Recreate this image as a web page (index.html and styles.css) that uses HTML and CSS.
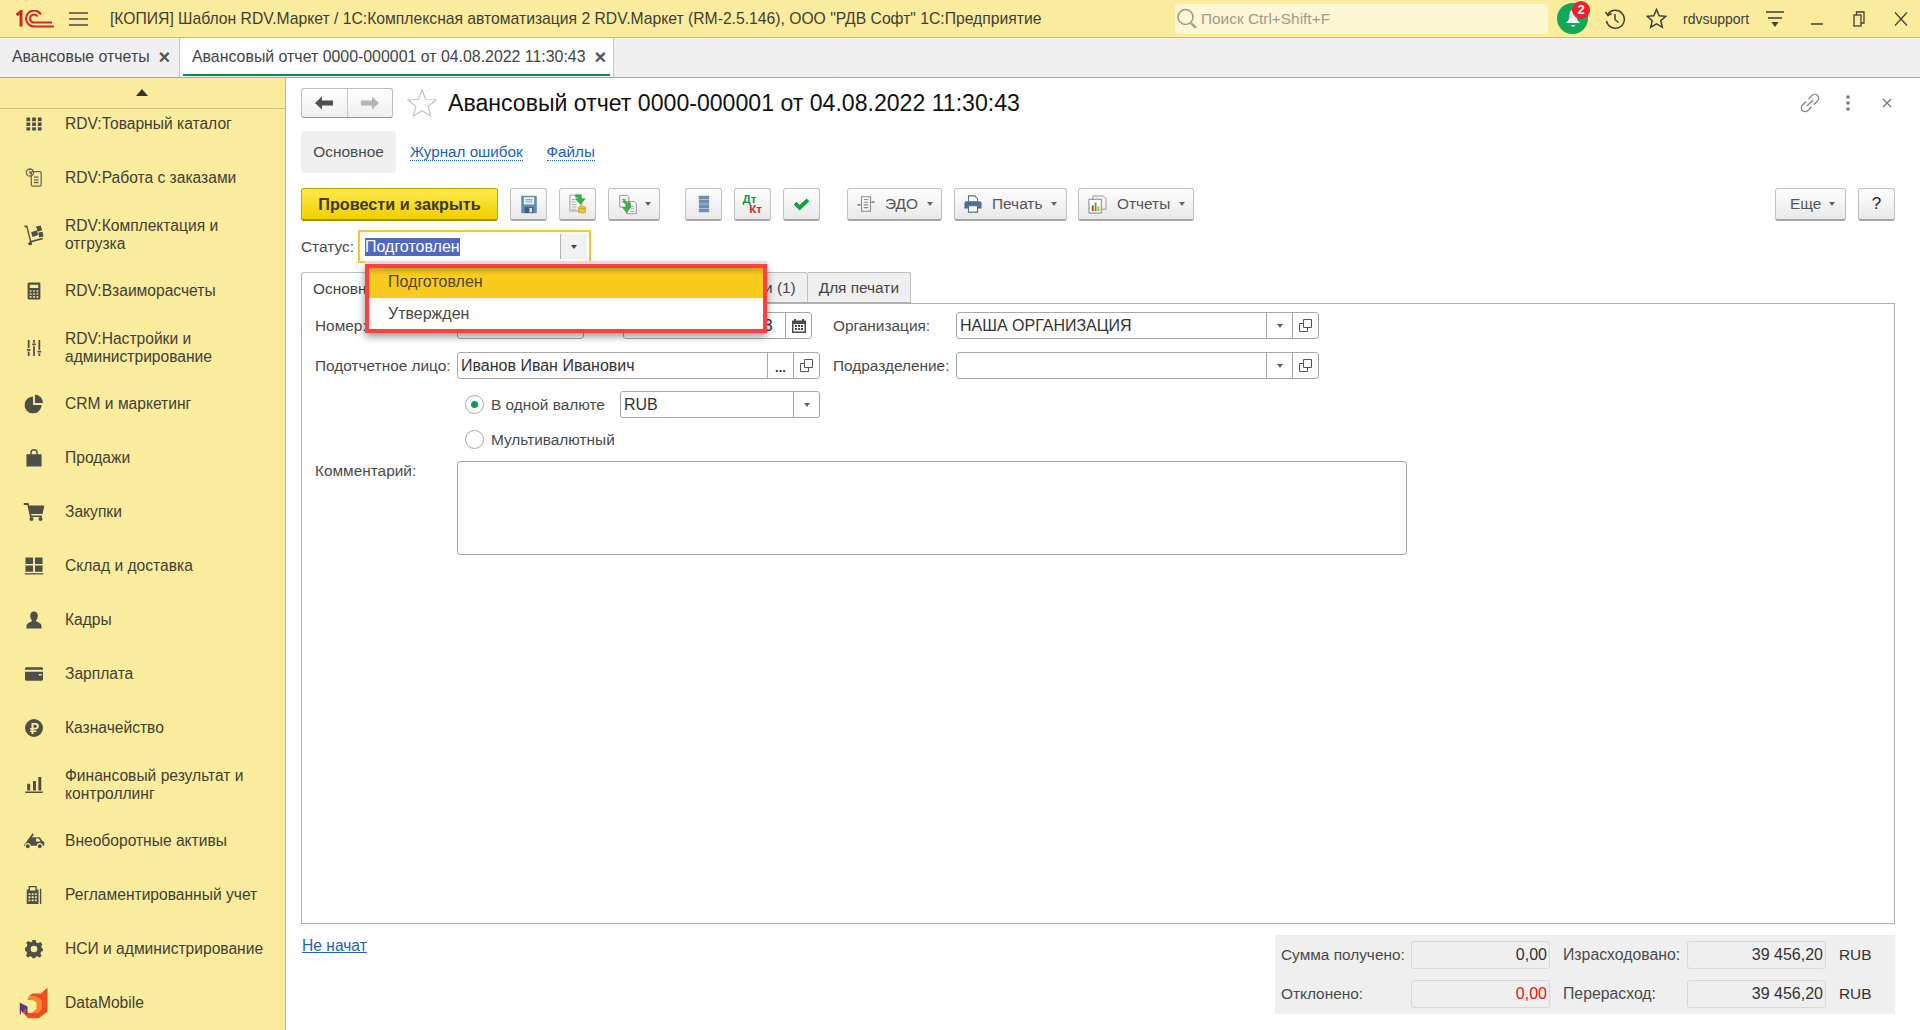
FILE: index.html
```html
<!DOCTYPE html>
<html lang="ru">
<head>
<meta charset="utf-8">
<title>Авансовый отчет</title>
<link rel="stylesheet" href="styles.css">
</head>
<body>
<header class="topbar">
  <svg class="logo" width="38" height="18" viewBox="0 0 38 18" fill="none" stroke="#d8232a"><path d="M0.5 5L5 1.5V16.5" stroke-width="3"/><path d="M25 4.5A8 8 0 1 0 18.500 16.500H38" stroke-width="2"/><path d="M21.500 6.500A4 4 0 1 0 18.500 12.500H36" stroke-width="2"/></svg>
  <svg class="burger" width="19" height="14" viewBox="0 0 19 14" stroke="#4a4a40" stroke-width="1.500"><path d="M0 1H19M0 7H19M0 13H19"/></svg>
  <div class="app-title">[КОПИЯ] Шаблон RDV.Маркет / 1С:Комплексная автоматизация 2 RDV.Маркет (RM-2.5.146), ООО "РДВ Софт" 1С:Предприятие</div>
  <div class="search">
    <svg width="20" height="22" viewBox="0 0 20 22" fill="none" stroke="#9c9c90" stroke-width="1.600"><circle cx="8.500" cy="9" r="7.500"/><path d="M14 15L19 20" stroke-width="2.400"/></svg>
    <span>Поиск Ctrl+Shift+F</span>
  </div>
  <div class="bell">
    <svg width="16" height="20" viewBox="0 0 16 20" fill="#fff"><path d="M8 1C5 1 4.500 4 4.500 7C4.500 10 3 12 1 14H15C13 12 11.500 10 11.500 7C11.500 4 11 1 8 1ZM5.500 16H10.500L8 18Z"/></svg>
    <span class="badge">2</span>
  </div>
  <svg class="top-ico history" width="22" height="22" viewBox="0 0 22 22" fill="none" stroke="#3f3f38" stroke-width="1.500"><path d="M4 6A9 9 0 1 1 2.500 13"/><path d="M1.500 4L4 7.500L7.500 5.500" /><path d="M11 6V11.500L14.500 14.500"/></svg>
  <svg class="top-ico fav" width="21" height="21" viewBox="0 0 21 21" fill="none" stroke="#3f3f38" stroke-width="1.500"><path d="M10.500 1.500L13.200 7.700L19.800 8.300L14.800 12.700L16.300 19.300L10.500 15.800L4.700 19.300L6.200 12.700L1.200 8.300L7.800 7.700Z"/></svg>
  <span class="user">rdvsupport</span>
  <svg class="top-ico usermenu" width="18" height="20" viewBox="0 0 18 20" stroke="#3f3f38" stroke-width="1.500"><path d="M0 3H18M2 9H16"/><path d="M5.500 13H12.500L9 18Z" fill="#3f3f38" stroke="none"/></svg>
  <svg class="top-ico win-min" width="12" height="12" viewBox="0 0 12 12" stroke="#3f3f38" stroke-width="1.500"><path d="M0 11H12"/></svg>
  <svg class="top-ico win-max" width="12" height="16" viewBox="0 0 12 16" fill="none" stroke="#3f3f38" stroke-width="1.300"><rect x="1" y="4" width="7" height="11"/><path d="M3.500 4V1H11V12H8"/></svg>
  <svg class="top-ico win-close" width="14" height="14" viewBox="0 0 14 14" stroke="#3f3f38" stroke-width="1.200"><path d="M1 0.500L13 13.500M13 0.500L1 13.500"/></svg>
</header>

<nav class="doc-tabs">
  <div class="doc-tab">Авансовые отчеты<span class="doc-x">×</span></div>
  <div class="doc-tab doc-tab-active">Авансовый отчет 0000-000001 от 04.08.2022 11:30:43<span class="doc-x">×</span></div>
</nav>

<div class="workspace">
  <aside class="sidebar">
    <div class="scroll-up"><span class="tri-up"></span></div>
    <div class="nav-scroll">
      <ul class="nav-list">
        <li class="nav-item"><svg width="17" height="16" viewBox="1 2 18 16" fill="#4f4f49"><path d="M2 3H6V7H2ZM8 3H12V7H8ZM14 3H18V7H14ZM2 8.500H6V12H2ZM8 8.500H12V12H8ZM14 8.500H18V12H14ZM2 13.500H6V17H2ZM8 13.500H12V17H8ZM14 13.500H18V17H14Z"/></svg><span>RDV:Товарный каталог</span></li>
        <li class="nav-item"><svg width="18" height="20" viewBox="0 0 20 22" fill="none" stroke="#65655c" stroke-width="1.400"><circle cx="5.500" cy="5" r="4"/><path d="M5.500 3V5.500H7.500"/><rect x="7" y="4" width="11" height="16" rx="1.500"/><path d="M10 10H15M10 13H15M10 16H15"/></svg><span>RDV:Работа с заказами</span></li>
        <li class="nav-item nav-item-two"><svg width="21" height="21" viewBox="0 0 22 22" fill="#4f4f49"><path d="M1 1H4L8 17L20 14L20.400 15.500L7 19L3 3H1Z"/><circle cx="7" cy="20" r="2"/><path d="M8 8L14 6L15.500 11L9.500 13ZM13 2L18 1L19.500 6L15 7.500ZM15.500 8.500L20 7.500L21 12.500L16.500 13.500Z"/></svg><span>RDV:Комплектация и отгрузка</span></li>
        <li class="nav-item"><svg width="17" height="19" viewBox="0 0 20 22" fill="#4f4f49"><path fill-rule="evenodd" d="M4 1H16A1.500 1.500 0 0 1 17.500 2.500V19.500A1.500 1.500 0 0 1 16 21H4A1.500 1.500 0 0 1 2.500 19.500V2.500A1.500 1.500 0 0 1 4 1ZM5 3.500V7.500H15V3.500ZM5 10V12H7V10ZM9 10V12H11V10ZM13 10V12H15V10ZM5 13.500V15.500H7V13.500ZM9 13.500V15.500H11V13.500ZM13 13.500V15.500H15V13.500ZM5 17V19H7V17ZM9 17V19H11V17ZM13 17V19H15V17Z"/></svg><span>RDV:Взаиморасчеты</span></li>
        <li class="nav-item nav-item-two"><svg width="16" height="18" viewBox="0 0 18 20" fill="#4f4f49"><path d="M2 1H4V10H2ZM1 11H5V13H1ZM2 14H4V19H2ZM8 1H10V4H8ZM7 5H11V7H7ZM8 8H10V19H8ZM14 1H16V12H14ZM13 13H17V15H13ZM14 16H16V19H14Z"/></svg><span>RDV:Настройки и администрирование</span></li>
        <li class="nav-item"><svg width="19" height="19" viewBox="0 0 20 20" fill="#4f4f49"><path d="M9 2V11H18A9 9 0 1 1 9 2Z"/><path d="M11 0A9 9 0 0 1 19.500 9H11Z"/></svg><span>CRM и маркетинг</span></li>
        <li class="nav-item"><svg width="17" height="19" viewBox="0 0 18 20" fill="#4f4f49"><path fill-rule="evenodd" d="M1 6H5V4.500A4 4 0 0 1 13 4.500V6H17V19H1ZM6.500 6H11.500V4.500A2.500 2.500 0 0 0 6.500 4.500Z"/></svg><span>Продажи</span></li>
        <li class="nav-item"><svg width="21" height="18" viewBox="0 0 21 18" fill="#4f4f49"><path d="M0 0H5L5.700 2.500H21L19 11H7.500L8 12.500H18.500V14H6.500L3.800 2H0Z"/><circle cx="8" cy="16" r="2"/><circle cx="17" cy="16" r="2"/></svg><span>Закупки</span></li>
        <li class="nav-item"><svg width="19" height="18" viewBox="0 1 20 18" fill="#4f4f49"><path d="M1 1H9V8H1ZM11 1H19V8H11ZM1 9.500H9V16H1ZM11 9.500H19V16H11ZM0 17.500H20V19H0Z"/></svg><span>Склад и доставка</span></li>
        <li class="nav-item"><svg width="17" height="19" viewBox="0 0 18 20" fill="#4f4f49"><path d="M9 1C12 1 13 3 13 5.500C13 8 12 9.500 11 10.500C11 12 14 12 16 14C17 15 17 17 17 19H1C1 17 1 15 2 14C4 12 7 12 7 10.500C6 9.500 5 8 5 5.500C5 3 6 1 9 1Z"/></svg><span>Кадры</span></li>
        <li class="nav-item"><svg width="19" height="15" viewBox="0 0.500 20 15" fill="#4f4f49"><path fill-rule="evenodd" d="M2 1H18A1.500 1.500 0 0 1 19.500 2.500V3.500H0.500V2.500A1.500 1.500 0 0 1 2 1ZM0.500 5.500H19.500V13.500A1.500 1.500 0 0 1 18 15H2A1.500 1.500 0 0 1 0.500 13.500ZM15 8V9.500H18V8Z"/></svg><span>Зарплата</span></li>
        <li class="nav-item"><svg width="20" height="20" viewBox="0 0 20 20" fill="#4f4f49"><path fill-rule="evenodd" d="M10 1A9 9 0 1 1 10 19A9 9 0 1 1 10 1ZM7.500 5V10H6V11.500H7.500V12.500H6V14H7.500V16H9.500V14H12.500V12.500H9.500V11.500H11.500A3.200 3.200 0 0 0 11.500 5ZM9.500 6.800H11.300A1.400 1.400 0 0 1 11.300 9.800H9.500Z"/></svg><span>Казначейство</span></li>
        <li class="nav-item nav-item-two"><svg width="19" height="16" viewBox="1 1 18 16.500" fill="#4f4f49"><path d="M3 8H6V15H3ZM9 5H12V15H9ZM14.500 1H17.500V15H14.500ZM1 16H19V17.500H1Z"/></svg><span>Финансовый результат и контроллинг</span></li>
        <li class="nav-item"><svg width="21" height="16" viewBox="0 0 22 16" fill="#4f4f49"><path fill-rule="evenodd" d="M0 13L8 2L9.500 0L11 1.500L8.500 4H17L20 8L22 9V13H20A3 3 0 0 0 14 13H7.500A3 3 0 0 0 1.500 13ZM13 5.500V8.500H18L16 5.500Z"/><circle cx="4.500" cy="13.500" r="2"/><circle cx="17" cy="13.500" r="2"/></svg><span>Внеоборотные активы</span></li>
        <li class="nav-item"><svg width="17" height="20" viewBox="0 0 18 22" fill="#4f4f49"><path fill-rule="evenodd" d="M3 1H12V5H14V21H1V5H3ZM4.500 2.500V6H10.500V2.500ZM3 9V11H5V9ZM6.500 9V11H8.500V9ZM10 9V11H12V9ZM3 12.500V14.500H5V12.500ZM6.500 12.500V14.500H8.500V12.500ZM10 12.500V14.500H12V12.500ZM3 16V18H5V16ZM6.500 16V18H8.500V16ZM10 16V18H12V16ZM15.500 4H17V21H15.500Z"/></svg><span>Регламентированный учет</span></li>
        <li class="nav-item"><svg width="19" height="19" viewBox="0 0 20 20" fill="#4f4f49"><path fill-rule="evenodd" d="M8.300 0.500H11.700L12.300 3.200L14.300 4L16.600 2.500L19 5L17.500 7.200L18.300 9.200L19.500 9.800V11.800L17.500 12.800L16.700 14.800L18 17.300L15.600 19L13.300 17.500L11.500 18.300L11 20H8.500L8 18.300L6 17.500L3.700 19L1.500 16.800L2.800 14.500L2 12.500L0.500 11.800V8.800L2.200 8L3 5.800L1.800 3.500L4 1.500L6.300 3L7.800 2.500ZM10 6.500A3.500 3.500 0 1 0 10 13.500A3.500 3.500 0 1 0 10 6.500Z"/></svg><span>НСИ и администрирование</span></li>
        <li class="nav-item"><svg class="dm-logo" width="29" height="31" viewBox="0 0 29 31"><path fill="#ee4d24" d="M28 0V24L19 31H9L3 25V19L8 25.500H18L22.500 21V13.500L16 9H9L13 6H21.500L22.500 5Z"/><path fill="#f5862a" d="M9 9H16L22.500 13.500V21L18 25.500H12L17 21.500V15L13 12.500H8Z"/><path fill="#5a3a7a" d="M0 15L8 19V27L6 26V21.500L3 25L1.500 23V27L0 26Z"/></svg><span>DataMobile</span></li>
      </ul>
    </div>
  </aside>

  <main class="main">
    <div class="title-row">
      <div class="nav-btns">
        <button class="nav-btn"><svg width="18" height="14" viewBox="0 0 18 14" fill="#4f4f4f"><path d="M0 7L7 0.500V4.500H18V9.500H7V13.500Z"/></svg></button>
        <button class="nav-btn"><svg width="18" height="14" viewBox="0 0 18 14" fill="#b4b4b4"><path d="M18 7L11 0.500V4.500H0V9.500H11V13.500Z"/></svg></button>
      </div>
      <svg class="title-star" width="30" height="28" viewBox="0 0 30 28" fill="#fff" stroke="#c4c4c4" stroke-width="1.200"><path d="M15 1L18.800 10.500L29 11L21.100 17.500L23.700 27L15 21.700L6.300 27L8.900 17.500L1 11L11.200 10.500Z"/></svg>
      <h1 class="doc-title">Авансовый отчет 0000-000001 от 04.08.2022 11:30:43</h1>
      <div class="title-tools">
        <svg width="20" height="20" viewBox="0 0 20 20" fill="none" stroke="#8a8a8a" stroke-width="1.400"><path d="M8.500 6L12 2.500A3.200 3.200 0 0 1 17.500 8L14 11.500"/><path d="M11.500 14L8 17.500A3.200 3.200 0 0 1 2.500 12L6 8.500"/><path d="M7 13L13 7"/></svg>
        <svg width="4" height="16" viewBox="0 0 4 16" fill="#7c7c7c"><circle cx="2" cy="2" r="1.800"/><circle cx="2" cy="8" r="1.800"/><circle cx="2" cy="14" r="1.800"/></svg>
        <svg width="10" height="10" viewBox="0 0 10 10" stroke="#777" stroke-width="1.300"><path d="M1 1L9 9M9 1L1 9"/></svg>
      </div>
    </div>

    <div class="form-nav">
      <span class="form-nav-active">Основное</span>
      <a class="dotted-link">Журнал ошибок</a>
      <a class="dotted-link">Файлы</a>
    </div>

    <div class="toolbar">
      <button class="btn btn-primary">Провести и закрыть</button>
      <button class="btn btn-icon"><svg width="18" height="19" viewBox="0 0 20 22"><path fill="#5f8ab5" d="M1 1H19V21H1Z"/><path fill="#eaf0f6" d="M4 2.500H16V11H4Z"/><path fill="#5f8ab5" d="M6 5H14V6H6ZM6 7.500H14V8.500H6Z"/><path fill="#3e5f80" d="M5 14H15V21H5Z"/><path fill="#dfe6ed" d="M10.500 15H13.500V20H10.500Z"/></svg></button>
      <button class="btn btn-icon"><svg width="20" height="21" viewBox="0 0 24 26"><path fill="#f8f8f2" stroke="#8a8a8a" d="M2 1.500H13L16 4.500V21H2Z"/><path stroke="#9a9a9a" d="M4 7H9M4 10H9M4 13H10M4 16H10M4 19H10"/><path fill="#3bb54a" stroke="#21873a" stroke-width=".6" d="M9 1H16V6H21L15 13L9 6H12V4H9Z"/><ellipse cx="17" cy="17" rx="4.500" ry="2" fill="#e9c53a" stroke="#a78a1c" stroke-width=".6"/><path fill="#e9c53a" stroke="#a78a1c" stroke-width=".6" d="M12.500 17V22.500C12.500 24 21.500 24 21.500 22.500V17C21.500 19 12.500 19 12.500 17Z"/></svg></button>
      <button class="btn btn-icon-menu"><svg width="20" height="21" viewBox="0 0 22 24"><path fill="#f6f6f6" stroke="#8a8a8a" d="M1.500 1.500H10L12 3.500V15H1.500Z"/><path fill="#f6f6f6" stroke="#8a8a8a" d="M9.500 8.500H18L20.500 11V22.500H9.500Z"/><path stroke="#9a9a9a" d="M3.500 6H9M3.500 9H8M14 14H18M14 17H18M14 20H18"/><path fill="#3bb54a" stroke="#21873a" stroke-width=".6" d="M6 6L11.500 11.500V8.500L14 10.500V15.500H11.500L13.500 15.500L9.500 21.500L5 15.500H8.500V12L6 9.500Z"/></svg><span class="caret"></span></button>
      <span class="tool-gap-a"></span>
      <button class="btn btn-icon"><svg width="12" height="18" viewBox="0 0 14 22" preserveAspectRatio="none" fill="#6c8fb0"><path d="M1 1H13V5.500H1ZM1 6.200H13V10.600H1ZM1 11.400H13V15.800H1ZM1 16.500H13V21H1Z"/></svg></button>
      <button class="btn btn-icon btn-dtkt"><span class="dt">Дт</span><span class="kt">Кт</span></button>
      <button class="btn btn-icon"><svg width="17" height="13" viewBox="0 0 18 14" fill="#12a437"><path d="M0.500 7L3.500 4L7 7.500L14.500 0.500L17.500 3.500L7 13.500Z"/></svg></button>
      <span class="tool-gap-b"></span>
      <button class="btn btn-menu btn-edo"><svg width="18" height="18" viewBox="0 0 20 20" fill="none" stroke="#8c8c8c" stroke-width="1.200"><path d="M5 2H15V18H5Z"/><path d="M7.500 5H12.500M7.500 8H12.500M7.500 11H12.500M7.500 14H12.500"/><path d="M0.500 11H4M16 8H19.500" stroke-width="2"/></svg><span>ЭДО</span><span class="caret"></span></button>
      <button class="btn btn-menu btn-print"><svg width="18" height="18" viewBox="0 0 20 20"><path fill="#fff" stroke="#4c6f91" stroke-width="1.200" d="M5 7V1H12L15 4V7"/><path fill="#4c6f91" d="M2.500 7H17.500A2 2 0 0 1 19.500 9V15H15V12H5V15H0.500V9A2 2 0 0 1 2.500 7Z"/><path fill="#fff" stroke="#4c6f91" stroke-width="1.200" d="M5 12H15V19H5Z"/></svg><span>Печать</span><span class="caret"></span></button>
      <button class="btn btn-menu btn-rep"><svg width="19" height="19" viewBox="0 0 20 20"><path fill="#f2f2f2" stroke="#9a9a9a" d="M5 1H16L19 4V15H5Z"/><path fill="#fff" stroke="#7f7f7f" d="M1 4.500H14V19H1Z"/><path fill="#d83a2a" d="M4 11H6V17H4Z"/><path fill="#42a847" d="M7 8H9V17H7Z"/><path fill="#d8a32a" d="M10 12H12V17H10Z"/></svg><span>Отчеты</span><span class="caret"></span></button>
      <span class="tool-spacer"></span>
      <button class="btn btn-menu btn-more"><span>Еще</span><span class="caret"></span></button>
      <button class="btn btn-help">?</button>
    </div>

    <div class="status-row">
      <label class="status-label">Статус:</label>
      <div class="status-field">
        <div class="status-value"><span class="selected">Подготовлен</span></div>
        <div class="status-btn"><span class="caret caret-dark"></span></div>
        <ul class="popup">
          <li class="popup-item popup-item-active">Подготовлен</li>
          <li class="popup-item">Утвержден</li>
        </ul>
      </div>
    </div>

    <div class="page-tabs">
      <div class="page-tab page-tab-active">Основное</div>
      <div class="page-tab page-tab-wide">Командировки (1)</div>
      <div class="page-tab">Для печати</div>
    </div>

    <section class="panel">
      <div class="panel-top">
        <div class="col-left">
          <div class="row">
            <label class="lbl">Номер:</label>
            <div class="field field-number"><span class="val">0000-000001</span></div>
            <span class="from">от:</span>
            <div class="field field-date"><span class="val">04.08.2022 11:30:43</span>
              <span class="fbtn"><svg width="14" height="15" viewBox="0 0 14 15" fill="#4a4a4a"><path fill-rule="evenodd" d="M2 1H4V2.500H10V1H12V2.500H14V15H0V2.500H2ZM1.500 6V13.500H12.500V6ZM3 7H5V9H3ZM6 7H8V9H6ZM9 7H11V9H9ZM3 10H5V12H3ZM6 10H8V12H6ZM9 10H11V12H9Z"/></svg></span>
            </div>
          </div>
          <div class="row row-gap13">
            <label class="lbl">Подотчетное лицо:</label>
            <div class="field field-person"><span class="val">Иванов Иван Иванович</span>
              <span class="fbtn fbtn-dots">...</span>
              <span class="fbtn"><svg class="open-ico" width="13" height="13" viewBox="0 0 13 13" fill="none" stroke="#555"><path d="M4.500 0.500H12.500V8.500H4.500Z"/><path d="M4.500 4.500H0.500V12.500H8.500V8.500"/></svg></span>
            </div>
          </div>
          <div class="row row-gap12 row-radio">
            <span class="radio radio-on"></span><span class="radio-text radio-text-one">В одной валюте</span>
            <div class="field field-cur"><span class="val">RUB</span><span class="fbtn"><span class="caret"></span></span></div>
          </div>
          <div class="row row-gap8 row-radio">
            <span class="radio"></span><span class="radio-text">Мультивалютный</span>
          </div>
        </div>
        <div class="col-right">
          <div class="row">
            <label class="lbl lbl-r">Организация:</label>
            <div class="field field-org"><span class="val">НАША ОРГАНИЗАЦИЯ</span>
              <span class="fbtn"><span class="caret"></span></span>
              <span class="fbtn"><svg width="13" height="13" viewBox="0 0 13 13" fill="none" stroke="#555"><path d="M4.500 0.500H12.500V8.500H4.500Z"/><path d="M4.500 4.500H0.500V12.500H8.500V8.500"/></svg></span>
            </div>
          </div>
          <div class="row row-gap13">
            <label class="lbl lbl-r">Подразделение:</label>
            <div class="field field-org"><span class="val"></span>
              <span class="fbtn"><span class="caret"></span></span>
              <span class="fbtn"><svg width="13" height="13" viewBox="0 0 13 13" fill="none" stroke="#555"><path d="M4.500 0.500H12.500V8.500H4.500Z"/><path d="M4.500 4.500H0.500V12.500H8.500V8.500"/></svg></span>
            </div>
          </div>
        </div>
      </div>
      <div class="row-comment">
        <label class="lbl lbl-comment">Комментарий:</label>
        <div class="comment-box"></div>
      </div>
    </section>

    <footer class="form-footer">
      <a class="status-link">Не начат</a>
      <div class="totals">
        <span class="t-lbl">Сумма получено:</span><span class="t-field">0,00</span>
        <span class="t-lbl t-lbl2">Израсходовано:</span><span class="t-field">39 456,20</span><span class="t-cur">RUB</span>
        <span class="t-lbl">Отклонено:</span><span class="t-field t-red">0,00</span>
        <span class="t-lbl t-lbl2">Перерасход:</span><span class="t-field">39 456,20</span><span class="t-cur">RUB</span>
      </div>
    </footer>
  </main>
</div>
</body>
</html>
```

FILE: styles.css
```css
* { box-sizing: border-box; }
html, body { margin: 0; height: 100%; overflow: hidden; }
body {
  display: flex; flex-direction: column; width: 1920px; height: 1030px;
  font-family: "Liberation Sans", Arial, sans-serif; font-size: 15.4px; color: #4a4a4a; background: #fff;
}
ul { list-style: none; margin: 0; padding: 0; }
button { font-family: inherit; margin: 0; padding: 0; }
svg { flex: none; display: block; }

/* top bar */
.topbar {
  height: 38px; flex: none; display: flex; align-items: center;
  background: #fbeb9c; border-bottom: 1px solid #cdbd6c; padding-left: 16px;
}
.burger { margin-left: 15px; }
.app-title { margin-left: 22px; width: 1065px; font-size: 15.7px; color: #3e3e38; white-space: nowrap; }
.search {
  width: 373px; height: 30px; background: #fdf6d2; border-radius: 3px;
  display: flex; align-items: center; gap: 4px; padding-left: 2px; color: #9c9c90; font-size: 15.4px;
}
.bell {
  position: relative; width: 31px; height: 31px; margin-left: 9px; border-radius: 50%;
  background: #13a858; display: flex; align-items: center; justify-content: center;
}
.badge {
  position: absolute; right: -2px; top: -2px; width: 18px; height: 18px; border-radius: 50%;
  background: #f0212e; color: #fff; font-size: 13px; font-weight: bold; line-height: 18px; text-align: center;
}
.history { margin-left: 16px; }
.fav { margin-left: 20px; }
.user { margin-left: 16px; font-size: 14px; color: #3e3e38; width: 67px; white-space: nowrap; }
.usermenu { margin-left: 16px; }
.win-min { margin-left: 27px; }
.win-max { margin-left: 30px; }
.win-close { margin-left: 29px; }

/* document tabs */
.doc-tabs {
  height: 40px; flex: none; display: flex; background: #f0f0f0; border-bottom: 1px solid #a8a8a8;
  font-size: 15.9px; color: #444;
}
.doc-tab { display: flex; align-items: center; padding-left: 12px; width: 180px; border-right: 1px solid #c4c4c4; white-space: nowrap; padding-bottom: 1px; }
.doc-tab-active { width: 434px; background: #fff; position: relative; }
.doc-tab-active::after { content: ""; position: absolute; left: 3px; right: 3px; bottom: 1px; height: 2px; background: #0c8a4a; }
.doc-x { margin-left: 9px; font-size: 20px; font-weight: bold; color: #555; line-height: 1; }

.workspace { flex: 1; min-height: 0; display: flex; }

/* sidebar */
.sidebar {
  width: 286px; flex: none; display: flex; flex-direction: column;
  background: #fbeb9c; border-right: 1px solid #c8bb76;
}
.scroll-up { height: 31px; flex: none; border-bottom: 1px solid #cdc18a; display: flex; align-items: center; justify-content: center; }
.tri-up { width: 0; height: 0; border-left: 6px solid transparent; border-right: 6px solid transparent; border-bottom: 7px solid #333; margin-bottom: 2px; margin-right: 2px; }
.nav-scroll { flex: 1; min-height: 0; overflow: hidden; }
.nav-list { margin-top: -12px; }
.nav-item { height: 54px; display: flex; align-items: center; position: relative; padding-left: 65px; padding-right: 15px; font-size: 15.6px; line-height: 18px; color: #403f38; }
.nav-item-two { height: 59px; }
.nav-item svg { position: absolute; left: 34px; top: 50%; transform: translate(-50%, -50%); }

/* main */
.main { flex: 1; min-width: 0; padding: 10px 25px 0 15px; display: flex; flex-direction: column; }
.title-row { height: 30px; flex: none; display: flex; align-items: center; }
.nav-btns { width: 92px; height: 30px; display: flex; border: 1px solid #bdbdbd; border-bottom-color: #999; border-radius: 3px; background: linear-gradient(#fff, #eee); }
.nav-btn { flex: 1; border: 0; background: none; display: flex; align-items: center; justify-content: center; }
.nav-btn + .nav-btn { border-left: 1px solid #c8c8c8; }
.title-star { margin-left: 14px; }
.doc-title { margin: 0 0 0 11px; font-size: 23.1px; font-weight: normal; color: #111; white-space: nowrap; flex: 1; }
.title-tools { display: flex; align-items: center; margin-right: 3px; }
.title-tools svg:nth-child(2) { margin-left: 26px; }
.title-tools svg:nth-child(3) { margin-left: 32px; }

.form-nav { height: 42px; margin-top: 13px; flex: none; display: flex; align-items: center; }
.form-nav-active { width: 95px; height: 42px; display: flex; align-items: center; justify-content: center; background: #f0f0f0; border-radius: 4px; }
.dotted-link { color: #1a63b8; border-bottom: 1px dotted #1a63b8; line-height: 17px; margin-left: 14px; font-size: 15.2px; }
.dotted-link + .dotted-link { margin-left: 24px; }

.toolbar { height: 33px; margin-top: 15px; flex: none; display: flex; gap: 12px; }
.btn {
  height: 33px; display: flex; align-items: center; justify-content: center;
  background: linear-gradient(#fdfdfd, #e9e9e9); border: 1px solid #c0c0c0; border-bottom: 2px solid #a6a6a6; border-radius: 3px;
  color: #555; font-size: 15.4px; white-space: nowrap;
}
.btn-primary { width: 197px; background: linear-gradient(#ffe94b, #f1d000); border-color: #c0a400; border-bottom-color: #a68e00; color: #3d3a14; font-weight: bold; font-size: 16.2px; }
.btn-icon { width: 37px; }
.btn-icon-menu { width: 52px; gap: 7px; padding-left: 1px; }
.tool-gap-a { width: 1px; }
.tool-gap-b { width: 3px; }
.btn-dtkt { flex-direction: column; align-items: center; font-weight: bold; line-height: 10px; font-size: 11.5px; }
.dt { color: #0f9a40; margin-right: 6px; }
.kt { color: #d8232a; margin-left: 6px; }
.btn-menu { gap: 10px; justify-content: flex-start; padding-left: 9px; }
.btn-menu .caret { margin-left: -1px; }
.btn-edo { width: 95px; }
.btn-print { width: 113px; }
.btn-rep { width: 116px; margin-left: -1px; }
.tool-spacer { flex: 1; }
.btn-more { width: 71px; padding-left: 14px; gap: 9px; }
.btn-help { width: 37px; color: #222; font-size: 17px; }
.caret { display: inline-block; width: 0; height: 0; border-left: 3.5px solid transparent; border-right: 3.5px solid transparent; border-top: 4px solid #666; }
.caret-dark { border-top-color: #444; }

.status-row { height: 33px; margin-top: 9px; flex: none; display: flex; align-items: center; }
.status-label { width: 57px; }
.status-field { position: relative; width: 233px; height: 33px; border: 2px solid #f6c62a; display: flex; align-items: stretch; padding: 2px 2px 2px 5px; font-size: 16px; }
.status-value { flex: 1; display: flex; align-items: center; color: #fff; }
.selected { background: #5068c4; line-height: 18px; }
.status-btn { width: 27px; background: #f2f2f2; border-left: 1px solid #b4b4b4; border-radius: 0 3px 3px 0; display: flex; align-items: center; justify-content: center; }

.popup {
  position: absolute; left: 5px; top: 32px; width: 402px; height: 69px; z-index: 5;
  background: #fff; border: 4px solid #ff4040;
  box-shadow: 0 -3px 0 #dedede, 0 3px 8px rgba(0, 0, 0, .45);
  color: #4a4a3a;
}
.popup-item { height: 31px; padding-left: 19px; display: flex; align-items: center; }
.popup-item-active { height: 30px; padding-bottom: 2px; background: linear-gradient(#c9a21d 0, #f9cb1f 7px); }

.page-tabs { height: 31px; margin-top: 9px; flex: none; display: flex; width: 610px; position: relative; z-index: 1; color: #444; }
.page-tab { height: 31px; padding: 0 11px; display: flex; align-items: center; background: #efefef; border: 1px solid #c0c0c0; border-bottom: 1px solid #b0b0b0; border-left: 0; border-radius: 0 3px 0 0; white-space: nowrap; }
.page-tab-active { height: 32px; background: #fff; border-left: 1px solid #b0b0b0; border-bottom: 0; border-radius: 3px 0 0 0; }
.page-tab-wide { flex: 1; justify-content: flex-end; }

.panel { height: 621px; flex: none; border: 1px solid #b0b0b0; padding: 8px 13px 0; }
.panel-top { display: flex; }
.col-left { width: 518px; flex: none; }
.row { height: 27px; display: flex; align-items: center; }
.row-gap13 { margin-top: 13px; }
.row-gap12 { margin-top: 12px; }
.row-gap8 { margin-top: 8px; }
.lbl { width: 142px; flex: none; white-space: nowrap; }
.lbl-r { width: 123px; }
.field { height: 27px; display: flex; align-items: center; border: 1px solid #a8a8a8; border-radius: 3px; color: #333; background: #fff; font-size: 16px; }
.val { flex: 1; padding-left: 3px; white-space: nowrap; overflow: hidden; }
.fbtn { width: 26px; height: 100%; flex: none; display: flex; align-items: center; justify-content: center; border-left: 1px solid #a8a8a8; }
.fbtn-dots { color: #333; font-weight: bold; font-size: 13px; padding-top: 4px; }
.field-number { width: 127px; }
.from { width: 39px; padding-left: 10px; }
.field-date { width: 189px; }
.field-person { width: 363px; }
.field-cur { width: 200px; margin-left: 12px; }
.field-org { width: 363px; }
.row-radio { padding-left: 150px; }
.radio { position: relative; width: 19px; height: 19px; flex: none; border: 1px solid #a8a8a8; border-radius: 50%; background: #fff; display: flex; align-items: center; justify-content: center; }
.radio-on::after { content: ""; width: 7px; height: 7px; border-radius: 50%; background: #0c9a4c; }
.radio-text { margin-left: 7px; white-space: nowrap; }
.radio-text-one { width: 117px; }
.row-comment { display: flex; margin-top: 8px; }
.lbl-comment { margin-top: 1px; }
.comment-box { width: 950px; height: 94px; border: 1px solid #a8a8a8; border-radius: 3px; }

.form-footer { margin-top: 11px; flex: 1; display: flex; justify-content: space-between; align-items: flex-start; }
.status-link { color: #1a63b8; text-decoration: underline; margin-left: 1px; margin-top: 2px; font-size: 15.6px; }
.totals {
  width: 620px; height: 79px; background: #efefef; padding: 6px 6px 0; display: grid;
  grid-template-columns: 130px 139px 137px 139px 1fr; grid-auto-rows: 28px; row-gap: 11px; align-items: center;
}
.t-lbl { white-space: nowrap; }
.t-lbl2 { padding-left: 13px; font-size: 15.8px; }
.t-field { height: 28px; display: flex; align-items: center; justify-content: flex-end; padding-right: 2px; border: 1px solid #d8d8d8; border-radius: 3px; color: #333; white-space: nowrap; font-size: 16px; }
.t-red { color: #ee1111; }
.t-cur { padding-left: 13px; color: #333; }
```
